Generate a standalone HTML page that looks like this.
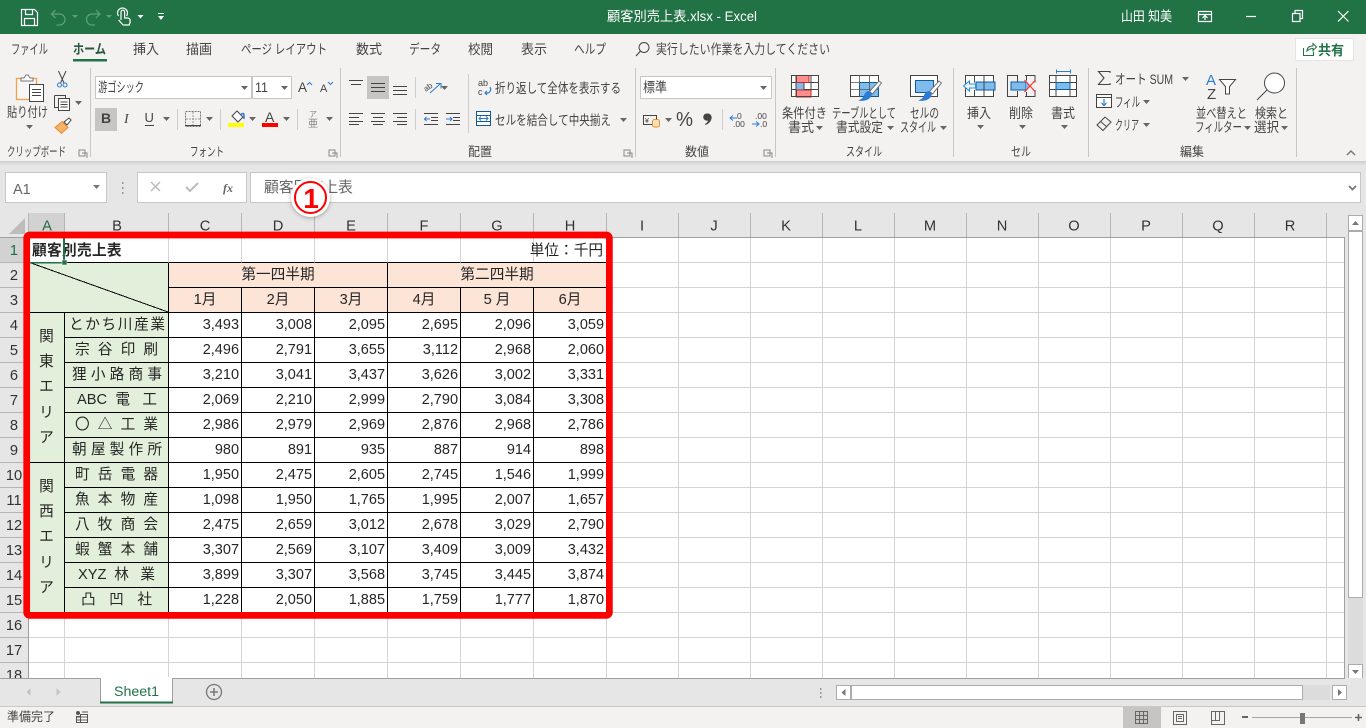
<!DOCTYPE html>
<html lang="ja"><head><meta charset="utf-8"><title>顧客別売上表.xlsx - Excel</title>
<style>
html,body{margin:0;padding:0;width:1366px;height:728px;overflow:hidden;background:#fff}
svg{position:absolute;left:0;top:0;display:block}
svg text{font-family:"Liberation Sans","Noto Sans CJK JP",sans-serif;font-size:13.5px;fill:#444}
.w{fill:#fff}svg text.s{font-size:12.5px}.c{text-anchor:middle}
svg text.h{font-size:14.67px;text-anchor:middle;fill:#333}
table{position:absolute;left:29px;top:238px;border-collapse:separate;border-spacing:0;table-layout:fixed;width:578px;font:14.67px/20px "Liberation Sans","Noto Sans CJK JP",sans-serif;color:#262626}
td{box-sizing:border-box;height:25px;border-right:1px solid #000;border-bottom:1px solid #000;padding:0 2px 0 0;text-align:right;white-space:nowrap;overflow:visible;font-size:14.5px}
td.n{border-right-color:#d4d4d4}
td.o{background:#FCE4D6;text-align:center;padding:0;font-size:14.67px}
td.g{background:#E2EFDA}
td.v{background:#E2EFDA;text-align:center;padding:1px 0 0;line-height:25.3px;font-size:14.67px}
td.b{background:#E2EFDA;text-align:justify;text-align-last:justify;text-justify:inter-character;font-size:14.67px;white-space:normal}
.p1{padding:0 3px 0 4px}.p2{padding:0 10px 0 10px}.p3{padding:0 6px 0 7px}.p4{padding:0 11px 0 12px}.p5{padding:0 13px}.p6{padding:0 16px}
</style></head><body>
<svg width="1366" height="728" viewBox="0 0 1366 728">
<defs><path id="a" d="M0 0h7l-3.500 4z" fill="#666"/><path id="l" d="M0 0h6v6h-6zM3 3h5v5" fill="none" stroke="#888"/></defs>
<!-- base -->
<rect width="1366" height="728" fill="#E6E6E6"/>
<rect width="1366" height="34" fill="#217346"/>
<rect y="34" width="1366" height="127" fill="#F3F2F1"/>
<rect y="161" width="1366" height="2" fill="#D2D2D2"/><rect y="163" width="1366" height="2" fill="#DFDFDF"/>
<!-- title bar -->
<g fill="none" stroke="#fff" stroke-width="1.200">
<path d="M21.500 9.500h13l3 3v13h-16zM25.500 9.500v5h7v-5M24.500 25.500v-7h10v7"/>
<path d="M118.500 16a5 5 0 1 1 8 0M121 20v-8a1.800 1.800 0 0 1 3.600 0v6h3a2.500 2.500 0 0 1 2.500 2.500v2l-1 2.500h-6l-4.500-5"/>
<path d="M1198.500 11.500h13v10h-13zM1198.500 14.500h13M1205 20v-4M1202.500 18l2.500-2.500 2.500 2.500"/>
<path d="M1246 16.500h10M1292.500 13.500h7.500v8h-7.500zM1295 13v-2.500h7.500v8h-2M1338 11l10.500 10.500M1348.500 11l-10.500 10.500"/>
</g>
<g fill="none" stroke="#5F9F7D" stroke-width="1.200"><path d="M55.500 10l-4 4 4 4M51.500 14h8a5 5 0 0 1 0 11h-3M96 10l4 4-4 4M100 14h-8a5 5 0 0 0 0 11h3"/></g>
<path d="M72 15h6l-3 3zM106 15h6l-3 3z" fill="#5F9F7D"/>
<path d="M137.500 15h6l-3 3.500zM158 16h6l-3 4zM158 13h6v1h-6z" fill="#fff"/>
<text x="607" y="21" class="w" textLength="150" lengthAdjust="spacingAndGlyphs">顧客別売上表.xlsx  -  Excel</text>
<text x="1121" y="21" class="w" textLength="51" lengthAdjust="spacingAndGlyphs">山田 知美</text>
<!-- tabs -->
<text x="11" y="54" textLength="37" lengthAdjust="spacingAndGlyphs">ファイル</text>
<text x="73" y="54" textLength="33" lengthAdjust="spacingAndGlyphs" font-weight="700" style="fill:#27573C">ホーム</text>
<rect x="73" y="59" width="34" height="2.500" fill="#217346"/>
<text x="133" y="54" textLength="26" lengthAdjust="spacingAndGlyphs">挿入</text>
<text x="186" y="54" textLength="26" lengthAdjust="spacingAndGlyphs">描画</text>
<text x="241" y="54" textLength="86" lengthAdjust="spacingAndGlyphs">ページ レイアウト</text>
<text x="356" y="54" textLength="26" lengthAdjust="spacingAndGlyphs">数式</text>
<text x="409" y="54" textLength="32" lengthAdjust="spacingAndGlyphs">データ</text>
<text x="468" y="54" textLength="25" lengthAdjust="spacingAndGlyphs">校閲</text>
<text x="521" y="54" textLength="26" lengthAdjust="spacingAndGlyphs">表示</text>
<text x="574" y="54" textLength="32" lengthAdjust="spacingAndGlyphs">ヘルプ</text>
<path d="M636 56l4.500-5" stroke="#444" stroke-width="1.200"/><circle cx="644" cy="47.500" r="5" fill="none" stroke="#444"/>
<text x="656" y="54" textLength="174" lengthAdjust="spacingAndGlyphs">実行したい作業を入力してください</text>
<rect x="1295.500" y="38.500" width="58" height="22" rx="1" fill="#fff" stroke="#E4E4E4"/>
<path d="M1303.500 48v7.500h10v-4M1307 51c0-4 3-5 6-5v-2.500l3.500 3.500-3.500 3.500v-2c-2 0-4 .5-6 2.500z" fill="none" stroke="#217346"/>
<text x="1318" y="55" textLength="26" lengthAdjust="spacingAndGlyphs" font-weight="700" style="fill:#217346">共有</text>
<!-- group separators -->
<path d="M90.500 68v89M340.500 68v89M635.500 68v89M775.500 68v89M953.500 68v89M1088.500 68v89M1296.500 68v89" stroke="#C8C6C4"/>
<path d="M177.500 109v21M220.500 109v21M297.500 109v21M415.500 77v21M415.500 109v21M468.500 74v59M722.500 109v21" stroke="#D0CECC"/>
<!-- clipboard -->
<rect x="16.500" y="78.500" width="20" height="21" fill="#F7F6F5" stroke="#F0A24A" stroke-width="1.300"/>
<path d="M21 81v-3h3l2-3h2l2 3h3v3z" fill="#fff" stroke="#777"/>
<rect x="29.500" y="84.500" width="14" height="17" fill="#fff" stroke="#444"/><path d="M32 89.500h9M32 92.500h9M32 95.500h9" stroke="#444"/>
<text x="7" y="117" textLength="41" lengthAdjust="spacingAndGlyphs">貼り付け</text><use href="#a" x="26" y="125"/>
<path d="M58.500 71l5.500 12M66 71l-5.500 12" stroke="#444" fill="none"/><circle cx="59.500" cy="85" r="2" fill="none" stroke="#2B7CD3"/><circle cx="65" cy="85" r="2" fill="none" stroke="#2B7CD3"/>
<path d="M54.500 95.500h11v3M54.500 95.500v12h4" fill="none" stroke="#444"/><rect x="58.500" y="98.500" width="11" height="12" fill="#fff" stroke="#444"/><path d="M60.500 102h7M60.500 104.500h7M60.500 107h7" stroke="#444"/>
<use href="#a" x="75" y="101"/>
<path d="M55 127.500l7-6 6 6-6.500 6z" fill="#F4B26A" stroke="#E98E2C"/><path d="M64 122l5-4 2 2-4 5z" fill="#fff" stroke="#444"/>
<text x="7" y="156" class="s" textLength="59" lengthAdjust="spacingAndGlyphs">クリップボード</text><use href="#l" x="79" y="150"/>
<!-- font -->
<rect x="95.500" y="76.500" width="156" height="22" fill="#fff" stroke="#C6C6C6"/><rect x="252.500" y="76.500" width="39" height="22" fill="#fff" stroke="#C6C6C6"/>
<text x="98" y="92" textLength="46" lengthAdjust="spacingAndGlyphs">游ゴシック</text><use href="#a" x="241" y="86"/>
<text x="255" y="92" textLength="13" lengthAdjust="spacingAndGlyphs">11</text><use href="#a" x="281" y="86"/>
<text x="298" y="92">A</text><path d="M307 85l2.500-2.500 2.500 2.500" fill="none" stroke="#2B7CD3"/>
<text x="320" y="92" style="font-size:11px">A</text><path d="M328 82l2.500 2.500 2.500-2.500" fill="none" stroke="#2B7CD3"/>
<rect x="95" y="108" width="22" height="23" fill="#C6C5C3"/>
<text x="101" y="123" font-weight="700" style="font-size:14px">B</text>
<text x="124" y="123" font-style="italic" style="font-size:14px;font-family:'Liberation Serif',serif">I</text>
<text x="144.500" y="122" style="font-size:13px">U</text><path d="M145 125.500h9" stroke="#444"/><use href="#a" x="163" y="117"/>
<path d="M185.500 111.500h15v15h-15z" fill="none" stroke="#777" stroke-dasharray="2 1"/><path d="M193 112v14M186 119h14" stroke="#999" stroke-dasharray="2 1"/><path d="M185 125.500h16" stroke="#444"/><use href="#a" x="206" y="117"/>
<path d="M232 116l5-5 6 6-5 5z" fill="#fff" stroke="#444"/><path d="M241 115c1-2 3-2 3 0v4" fill="none" stroke="#2B7CD3" stroke-width="1.500"/><rect x="228" y="123" width="16" height="4" fill="#FF0"/><use href="#a" x="249" y="117"/>
<text x="265" y="122" style="font-size:14px">A</text><rect x="262" y="123" width="16" height="4" fill="#F00"/><use href="#a" x="283" y="117"/>
<text x="309" y="117" style="font-size:8px;fill:#888">ア</text><text x="308" y="127" style="font-size:10px;fill:#888">亜</text><use href="#a" x="326" y="117"/>
<text x="190" y="156" class="s" textLength="34" lengthAdjust="spacingAndGlyphs">フォント</text><use href="#l" x="329" y="150"/>
<!-- alignment -->
<rect x="367" y="76" width="22" height="23" fill="#C6C5C3"/>
<path d="M349 80.500h14M351 84.500h10M371 83.500h14M371 87.500h14M371 91.500h14M393 86.500h14M393 90.500h14M393 94.500h14M349 113.500h14M349 117.500h10M349 121.500h14M349 124.500h10M371 113.500h14M373 117.500h10M371 121.500h14M373 124.500h10M393 113.500h14M397 117.500h10M393 121.500h14M397 124.500h10M424 113.500h14M431 117.500h7M431 120.500h7M424 124.500h14M446 113.500h14M453 117.500h7M453 120.500h7M446 124.500h14" stroke="#444"/>
<path d="M424 119h6M426.500 117l-2 2 2 2M446 119h6M450 117l2 2-2 2" fill="none" stroke="#2B7CD3"/>
<text x="424" y="90" style="font-size:8px" transform="rotate(-35 428 88)">ab</text><path d="M430 93l10-9M436 83.500h5v5" fill="none" stroke="#2B7CD3"/><use href="#a" x="441" y="86"/>
<text x="478" y="86" style="font-size:9px">ab</text><text x="478" y="95" style="font-size:9px">c</text><path d="M490 87c2 4-1 7-5 6M487 91l-2 2 2 2" fill="none" stroke="#2B7CD3" stroke-width="1.200"/>
<text x="495" y="93" textLength="126" lengthAdjust="spacingAndGlyphs">折り返して全体を表示する</text>
<rect x="476.500" y="111.500" width="14" height="14" fill="#fff" stroke="#0F5C9C"/><path d="M476 115.500h15M476 121.500h15" stroke="#0F5C9C"/><rect x="477" y="116" width="13" height="5" fill="#fff"/><path d="M479 118.500h9M481 116.500l-2 2 2 2M486 116.500l2 2-2 2" fill="none" stroke="#2B7CD3"/>
<text x="495" y="125" textLength="116" lengthAdjust="spacingAndGlyphs">セルを結合して中央揃え</text><use href="#a" x="620" y="118"/>
<text x="468" y="156" class="s" textLength="24" lengthAdjust="spacingAndGlyphs">配置</text><use href="#l" x="624" y="150"/>
<!-- number -->
<rect x="640.500" y="76.500" width="131" height="22" fill="#fff" stroke="#C6C6C6"/><text x="643" y="92" textLength="24" lengthAdjust="spacingAndGlyphs">標準</text><use href="#a" x="760" y="86"/>
<rect x="643.500" y="115.500" width="13" height="9" fill="none" stroke="#444"/><text x="645" y="123" style="font-size:7px">¥</text><rect x="652.500" y="119.500" width="7" height="7.500" rx="2" fill="#FCE0B8" stroke="#E98E2C"/><use href="#a" x="665" y="118"/>
<text x="676" y="126" textLength="17" lengthAdjust="spacingAndGlyphs" style="font-size:20px">%</text>
<path d="M707 113.500a4 4 0 0 1 4.500 5c-.5 3-3 5.500-6 6.500l-.5-1c1.500-.8 2.800-2 3-3.500a3.600 3.600 0 1 1-1-7z" fill="#444"/>
<text x="737" y="119" style="font-size:8.500px">0</text><text x="733" y="127" style="font-size:8.500px">.00</text><path d="M730 118h7M733 115.500l-3 2.500 3 2.500" fill="none" stroke="#2B7CD3"/>
<text x="755" y="119" style="font-size:8.500px">.00</text><text x="760" y="127" style="font-size:8.500px">.0</text><path d="M752 124h7M756 121.500l3 2.500-3 2.500" fill="none" stroke="#2B7CD3"/>
<text x="685" y="156" class="s" textLength="24" lengthAdjust="spacingAndGlyphs">数値</text><use href="#l" x="764" y="150"/>
<!-- styles -->
<rect x="791.500" y="75.500" width="27" height="21" fill="#fff"/><rect x="796.500" y="75.500" width="12.500" height="7" fill="#FF8F8F" stroke="#D22"/><rect x="796" y="83" width="8.500" height="7" fill="#7FBBEB"/><rect x="796.500" y="90" width="14.500" height="7" fill="#FF8F8F" stroke="#D22"/>
<path d="M791.500 75.500h27v21h-27zM791.500 82.500h5M809 82.500h10M804 89.500h15M791.500 89.500h5M796 75.500v21M804 90v-7M811 75.500v14" fill="none" stroke="#444"/>
<text x="782" y="118" textLength="45" lengthAdjust="spacingAndGlyphs">条件付き</text><text x="788" y="132" textLength="26" lengthAdjust="spacingAndGlyphs">書式</text><use href="#a" x="816" y="126"/>
<rect x="850.500" y="75.500" width="28" height="21" fill="#fff" stroke="#444"/><rect x="859.500" y="82.500" width="19" height="14" fill="#7FBBEB" stroke="#0F5C9C"/><path d="M859.500 75.500v7M869.500 75.500v7M850.500 82.500h9M850.500 89.500h9M859.500 89v8M869.500 83v14M860 89.500h18" stroke="#555" fill="none" stroke-width=".8"/>
<path d="M879 81l2.500 2-9 11-3-2.500z" fill="#fff" stroke="#777"/><path d="M869 91c3 1 3.500 3 2 5.500-2.500 4-8 5-13 4 3-1 5-2.500 6-5 1-3 3-4.500 5-4.500z" fill="#2B7CD3"/>
<text x="832" y="118" textLength="64" lengthAdjust="spacingAndGlyphs">テーブルとして</text><text x="836" y="132" textLength="47" lengthAdjust="spacingAndGlyphs">書式設定</text><use href="#a" x="887" y="126"/>
<rect x="910.500" y="75.500" width="27" height="21" fill="#fff" stroke="#444"/><rect x="915.500" y="80.500" width="18" height="12" fill="#7FBBEB" stroke="#0F5C9C"/>
<path d="M939 81l2.500 2-9 11-3-2.500z" fill="#fff" stroke="#777"/><path d="M929 91c3 1 3.500 3 2 5.500-2.500 4-8 5-13 4 3-1 5-2.500 6-5 1-3 3-4.500 5-4.500z" fill="#2B7CD3"/>
<text x="910" y="118" textLength="29" lengthAdjust="spacingAndGlyphs">セルの</text><text x="900" y="132" textLength="36" lengthAdjust="spacingAndGlyphs">スタイル</text><use href="#a" x="940" y="126"/>
<text x="846" y="156" class="s" textLength="36" lengthAdjust="spacingAndGlyphs">スタイル</text>
<!-- cells -->
<rect x="965.500" y="75.500" width="28" height="21" fill="#fff" stroke="#444"/><rect x="976" y="82" width="19" height="8" fill="#7FBBEB" stroke="#0F5C9C"/><path d="M974.500 75.500v7M974.500 90v6.500M984 75.500v21" stroke="#444" fill="none"/><path d="M963.500 86l6-5v3h6v4h-6v3z" fill="#EAF3FB" stroke="#2B8CD8"/>
<text x="967" y="118" textLength="24" lengthAdjust="spacingAndGlyphs">挿入</text><use href="#a" x="977" y="125"/>
<path d="M1018 75.500h-10.500v21h10.500M1025 75.500h10v7M1035 90v6.500h-10M1017.500 75.500v6M1017.500 91v5.500M1026.500 75.500v5M1026.500 92v4.500" fill="none" stroke="#444"/><rect x="1011" y="82" width="15" height="8" fill="#7FBBEB" stroke="#0F5C9C"/><path d="M1026 81l4 5-4 5" fill="#7FBBEB"/><path d="M1024.500 80l11 12M1035.500 80l-11 12" stroke="#F33" stroke-width="1.200"/>
<text x="1009" y="118" textLength="24" lengthAdjust="spacingAndGlyphs">削除</text><use href="#a" x="1019" y="125"/>
<rect x="1049.500" y="75.500" width="27" height="21" fill="#fff" stroke="#444"/><path d="M1049.500 82.500h27M1049.500 89.500h27M1056 75.500v21M1070 75.500v21" stroke="#444"/><rect x="1056" y="82.500" width="14" height="7" fill="#7FBBEB" stroke="#0F5C9C"/><path d="M1056 71.500h15M1056.500 69.500v4M1070.500 69.500v4" stroke="#2B7CD3"/>
<text x="1051" y="118" textLength="24" lengthAdjust="spacingAndGlyphs">書式</text><use href="#a" x="1061" y="125"/>
<text x="1011" y="156" class="s" textLength="20" lengthAdjust="spacingAndGlyphs">セル</text>
<!-- edit -->
<path d="M1110 73v-1.500h-11.500l5.500 6.500-5.500 6.500h11.500v-1.500" fill="none" stroke="#444" stroke-width="1.100"/>
<text x="1115" y="84" textLength="58" lengthAdjust="spacingAndGlyphs">オート SUM</text><use href="#a" x="1182" y="77"/>
<rect x="1096.500" y="94.500" width="15" height="13" fill="#fff" stroke="#444"/><path d="M1096.500 97.500h15" stroke="#444"/><path d="M1104 99v6M1101.500 103l2.500 2.500 2.500-2.500" fill="none" stroke="#2B7CD3" stroke-width="1.200"/>
<text x="1115" y="107" textLength="25" lengthAdjust="spacingAndGlyphs">フィル</text><use href="#a" x="1143" y="100"/>
<path d="M1097 125l8-8 6 5-8 8.500zM1100.500 121.500l6.500 5.500" fill="none" stroke="#444"/>
<text x="1115" y="130" textLength="24" lengthAdjust="spacingAndGlyphs">クリア</text><use href="#a" x="1143" y="123"/>
<text x="1206" y="85" style="font-size:15px;fill:#2B7CD3">A</text><text x="1207" y="99" style="font-size:15px">Z</text>
<path d="M1219.500 79.500h16l-6 7v7.500h-4v-7.500z" fill="#fff" stroke="#444"/>
<text x="1196" y="118" textLength="51" lengthAdjust="spacingAndGlyphs">並べ替えと</text><text x="1195" y="132" textLength="47" lengthAdjust="spacingAndGlyphs">フィルター</text><use href="#a" x="1244" y="126"/>
<circle cx="1274.500" cy="83" r="10" fill="#fff" stroke="#444"/><path d="M1267 90l-10 10" stroke="#444"/>
<text x="1255" y="118" textLength="33" lengthAdjust="spacingAndGlyphs">検索と</text><text x="1254" y="132" textLength="25" lengthAdjust="spacingAndGlyphs">選択</text><use href="#a" x="1281" y="126"/>
<text x="1180" y="156" class="s" textLength="24" lengthAdjust="spacingAndGlyphs">編集</text>
<path d="M1347 155l4-4 4 4" fill="none" stroke="#777" stroke-width="1.500"/>
<!-- formula bar -->
<rect x="5.500" y="172.500" width="101" height="30" fill="#fff" stroke="#C6C6C6"/>
<text x="13" y="194" style="font-size:14.500px;fill:#666">A1</text><path d="M93 185h7l-3.500 4z" fill="#777"/>
<path d="M122 182h1.500v2h-1.500zM122 187h1.500v2h-1.500zM122 192h1.500v2h-1.500z" fill="#999"/>
<rect x="137.500" y="172.500" width="109" height="30" fill="#fff" stroke="#C6C6C6"/>
<path d="M151 182l9 9M160 182l-9 9" stroke="#BBB" stroke-width="1.500"/><path d="M186 187l4 4 8-8" fill="none" stroke="#BBB" stroke-width="2"/>
<text x="223" y="192" font-style="italic" font-weight="700" style="font-size:12px;fill:#666;font-family:'Liberation Serif',serif">fx</text>
<rect x="250.500" y="172.500" width="1110" height="30" fill="#fff" stroke="#C6C6C6"/>
<text x="264" y="192" style="font-size:14.800px;fill:#666">顧客別売上表</text>
<path d="M1349 186l3.500 3.500 3.500-3.500" fill="none" stroke="#777" stroke-width="1.800"/>
<!-- sheet -->
<rect x="29" y="238" width="1316" height="440" fill="#fff"/>
<path d="M64.500 238V678M168.500 238V678M241.500 238V678M314.500 238V678M387.500 238V678M460.500 238V678M533.500 238V678M606.500 238V678M678.500 238V678M750.500 238V678M822.500 238V678M894.500 238V678M966.500 238V678M1038.500 238V678M1110.500 238V678M1182.500 238V678M1254.500 238V678M1326.500 238V678M29 262.500H1344M29 287.500H1344M29 312.500H1344M29 337.500H1344M29 362.500H1344M29 387.500H1344M29 412.500H1344M29 437.500H1344M29 462.500H1344M29 487.500H1344M29 512.500H1344M29 537.500H1344M29 562.500H1344M29 587.500H1344M29 612.500H1344M29 637.500H1344M29 662.500H1344" stroke="#D4D4D4"/>
<!-- headers -->
<rect x="29" y="213" width="36" height="24" fill="#D2D2D2"/><rect x="0" y="238" width="28" height="24" fill="#D2D2D2"/>
<path d="M25 218v16H9z" fill="#BDBDBD"/>
<path d="M28.500 213v24M64.500 213v24M168.500 213v24M241.500 213v24M314.500 213v24M387.500 213v24M460.500 213v24M533.500 213v24M606.500 213v24M678.500 213v24M750.500 213v24M822.500 213v24M894.500 213v24M966.500 213v24M1038.500 213v24M1110.500 213v24M1182.500 213v24M1254.500 213v24M1326.500 213v24M0 262.500h28M0 287.500h28M0 312.500h28M0 337.500h28M0 362.500h28M0 387.500h28M0 412.500h28M0 437.500h28M0 462.500h28M0 487.500h28M0 512.500h28M0 537.500h28M0 562.500h28M0 587.500h28M0 612.500h28M0 637.500h28M0 662.500h28" stroke="#B5B5B5"/>
<path d="M0 237.500H1344.500V678M28.500 237.500V678" fill="none" stroke="#9F9F9F"/>
<text class="h" x="47" y="230.500" style="fill:#1E6B41">A</text><text class="h" x="117" y="230.500">B</text><text class="h" x="205" y="230.500">C</text><text class="h" x="278" y="230.500">D</text><text class="h" x="351" y="230.500">E</text><text class="h" x="424" y="230.500">F</text><text class="h" x="497" y="230.500">G</text><text class="h" x="570" y="230.500">H</text><text class="h" x="642" y="230.500">I</text><text class="h" x="714" y="230.500">J</text><text class="h" x="786" y="230.500">K</text><text class="h" x="858" y="230.500">L</text><text class="h" x="930" y="230.500">M</text><text class="h" x="1002" y="230.500">N</text><text class="h" x="1074" y="230.500">O</text><text class="h" x="1146" y="230.500">P</text><text class="h" x="1218" y="230.500">Q</text><text class="h" x="1290" y="230.500">R</text>
<text class="h" x="14" y="255" style="fill:#1E6B41">1</text><text class="h" x="14" y="280">2</text><text class="h" x="14" y="305">3</text><text class="h" x="14" y="330">4</text><text class="h" x="14" y="355">5</text><text class="h" x="14" y="380">6</text><text class="h" x="14" y="405">7</text><text class="h" x="14" y="430">8</text><text class="h" x="14" y="455">9</text><text class="h" x="14" y="480">10</text><text class="h" x="14" y="505">11</text><text class="h" x="14" y="530">12</text><text class="h" x="14" y="555">13</text><text class="h" x="14" y="580">14</text><text class="h" x="14" y="605">15</text><text class="h" x="14" y="630">16</text><text class="h" x="14" y="655">17</text><text class="h" x="14" y="680">18</text>
<!-- vertical scrollbar -->
<rect x="1345" y="213" width="21" height="466" fill="#E6E6E6"/>
<rect x="1348" y="231" width="15" height="433" fill="#DCDCDC"/>
<rect x="1348.500" y="215.500" width="14" height="15" fill="#fff" stroke="#ABABAB"/><path d="M1352 225h7l-3.500-4z" fill="#777"/>
<rect x="1348.500" y="231.500" width="14" height="366" fill="#fff" stroke="#ABABAB"/>
<rect x="1348.500" y="664.500" width="14" height="14" fill="#fff" stroke="#ABABAB"/><path d="M1352 670h7l-3.500 4z" fill="#777"/>
<!-- tab bar -->
<rect y="678" width="1366" height="29" fill="#E6E6E6"/>
<path d="M0 678.500H1345" stroke="#9F9F9F"/>
<path d="M30.500 688v8l-4-4zM56.500 688v8l4-4z" fill="#C4C4C4"/>
<path d="M100.500 703V678.500H172.500V703" fill="#fff" stroke="#9F9F9F"/>
<rect x="101" y="677" width="71" height="3" fill="#fff"/>
<rect x="100" y="701.500" width="73" height="2" fill="#217346"/>
<text x="114" y="696" textLength="45" lengthAdjust="spacingAndGlyphs" style="font-size:13.500px;fill:#217346">Sheet1</text>
<circle cx="214" cy="692" r="7.500" fill="none" stroke="#777" stroke-width="1.300"/><path d="M214 688v8M210 692h8" stroke="#777" stroke-width="1.500"/>
<path d="M820 688h1.500v2H820zM820 692h1.500v2H820zM820 696h1.500v2H820z" fill="#999"/>
<rect x="851" y="685" width="479" height="15" fill="#DCDCDC"/>
<rect x="836.500" y="685.500" width="14" height="14" fill="#fff" stroke="#ABABAB"/><path d="M845.500 689v7l-4-3.500z" fill="#777"/>
<rect x="851.500" y="685.500" width="451" height="14" fill="#fff" stroke="#ABABAB"/>
<rect x="1332.500" y="685.500" width="14" height="14" fill="#fff" stroke="#ABABAB"/><path d="M1338 689v7l4-3.500z" fill="#777"/>
<!-- status bar -->
<rect y="706" width="1366" height="1" fill="#C8C8C8"/><rect y="707" width="1366" height="21" fill="#F3F2F1"/>
<text x="7" y="721" class="s" textLength="48" lengthAdjust="spacingAndGlyphs">準備完了</text>
<rect x="80.500" y="714.500" width="7" height="8" fill="#fff" stroke="#555"/><rect x="76" y="711" width="4" height="4" rx="2" fill="#555"/><path d="M77 717h10M77 720h10M82 712h6" stroke="#555"/><rect x="76.500" y="716.500" width="4" height="6" fill="none" stroke="#555"/>
<rect x="1123" y="707" width="38" height="21" fill="#C6C5C3"/>
<path d="M1135.500 711.500h12v12h-12zM1139.500 711.500v12M1143.500 711.500v12M1135.500 715.500h12M1135.500 719.500h12" fill="none" stroke="#666"/>
<path d="M1173.500 711.500h13v13h-13zM1176.500 714.500h7v7h-7zM1178 716.500h4M1178 718.500h4" fill="none" stroke="#666"/>
<path d="M1211.500 711.500h13v13h-13zM1211.500 720.500h8v-9M1215.500 711.500v9" fill="none" stroke="#666"/>
<rect x="1242" y="716" width="6" height="2" fill="#666"/><rect x="1252" y="717" width="100" height="1" fill="#A6A6A6"/><rect x="1300" y="713" width="5" height="11" fill="#777"/><path d="M1355 717.500h7M1358.500 714v7" stroke="#666" stroke-width="1.600"/>
</svg>
<table><colgroup><col style="width:36px"><col style="width:104px"><col style="width:73px"><col style="width:73px"><col style="width:73px"><col style="width:73px"><col style="width:73px"><col style="width:73px"></colgroup>
<tr><td colspan="2" class="n" style="text-align:left;padding:1px 0 0 3px;font-weight:700;font-size:14.670px;letter-spacing:.33px">顧客別売上表</td><td class="n"></td><td class="n"></td><td class="n"></td><td class="n"></td><td colspan="2" style="padding:1px 3px 0 0;font-size:14.670px;border-right-color:#d4d4d4">単位：千円</td></tr>
<tr><td colspan="2" rowspan="2" class="g"></td><td colspan="3" class="o">第一四半期</td><td colspan="3" class="o">第二四半期</td></tr>
<tr><td class="o">1月</td><td class="o">2月</td><td class="o">3月</td><td class="o">4月</td><td class="o">5 月</td><td class="o">6月</td></tr>
<tr><td rowspan="6" class="v">関<br>東<br>エ<br>リ<br>ア</td><td class="b p1">とかち川産業</td><td>3,493</td><td>3,008</td><td>2,095</td><td>2,695</td><td>2,096</td><td>3,059</td></tr>
<tr><td class="b p2">宗谷印刷</td><td>2,496</td><td>2,791</td><td>3,655</td><td>3,112</td><td>2,968</td><td>2,060</td></tr>
<tr><td class="b p3">狸小路商事</td><td>3,210</td><td>3,041</td><td>3,437</td><td>3,626</td><td>3,002</td><td>3,331</td></tr>
<tr><td class="b p4">ABC 電 工</td><td>2,069</td><td>2,210</td><td>2,999</td><td>2,790</td><td>3,084</td><td>3,308</td></tr>
<tr><td class="b p2">〇△工業</td><td>2,986</td><td>2,979</td><td>2,969</td><td>2,876</td><td>2,968</td><td>2,786</td></tr>
<tr><td class="b p3">朝屋製作所</td><td>980</td><td>891</td><td>935</td><td>887</td><td>914</td><td>898</td></tr>
<tr><td rowspan="6" class="v">関<br>西<br>エ<br>リ<br>ア</td><td class="b p2">町岳電器</td><td>1,950</td><td>2,475</td><td>2,605</td><td>2,745</td><td>1,546</td><td>1,999</td></tr>
<tr><td class="b p2">魚本物産</td><td>1,098</td><td>1,950</td><td>1,765</td><td>1,995</td><td>2,007</td><td>1,657</td></tr>
<tr><td class="b p2">八牧商会</td><td>2,475</td><td>2,659</td><td>3,012</td><td>2,678</td><td>3,029</td><td>2,790</td></tr>
<tr><td class="b p2">蝦蟹本舗</td><td>3,307</td><td>2,569</td><td>3,107</td><td>3,409</td><td>3,009</td><td>3,432</td></tr>
<tr><td class="b p5">XYZ 林 業</td><td>3,899</td><td>3,307</td><td>3,568</td><td>3,745</td><td>3,445</td><td>3,874</td></tr>
<tr><td class="b p6">凸凹社</td><td>1,228</td><td>2,050</td><td>1,885</td><td>1,759</td><td>1,777</td><td>1,870</td></tr>
</table>
<svg width="1366" height="728" viewBox="0 0 1366 728">
<path d="M31 263L168 312" stroke="#000" stroke-width="1" shape-rendering="crispEdges"/>
<rect x="63" y="238" width="2" height="23" fill="#217346"/><rect x="30" y="262" width="33" height="1.500" fill="#217346"/><rect x="62" y="260" width="5" height="5" fill="#217346" stroke="#fff" stroke-width=".5"/>
<rect x="26.700" y="235" width="582.700" height="380.400" rx="3" fill="none" stroke="#F00" stroke-width="6.700"/>
<circle cx="310.500" cy="197.500" r="19.500" fill="#fff" style="filter:drop-shadow(0 1px 2px rgba(0,0,0,.3))"/>
<circle cx="310.500" cy="197.500" r="15.500" fill="#fff" stroke="#F00" stroke-width="2"/>
<text x="311" y="208" text-anchor="middle" font-weight="700" style="font-size:28px;fill:#F00">1</text>
</svg>
</body></html>
